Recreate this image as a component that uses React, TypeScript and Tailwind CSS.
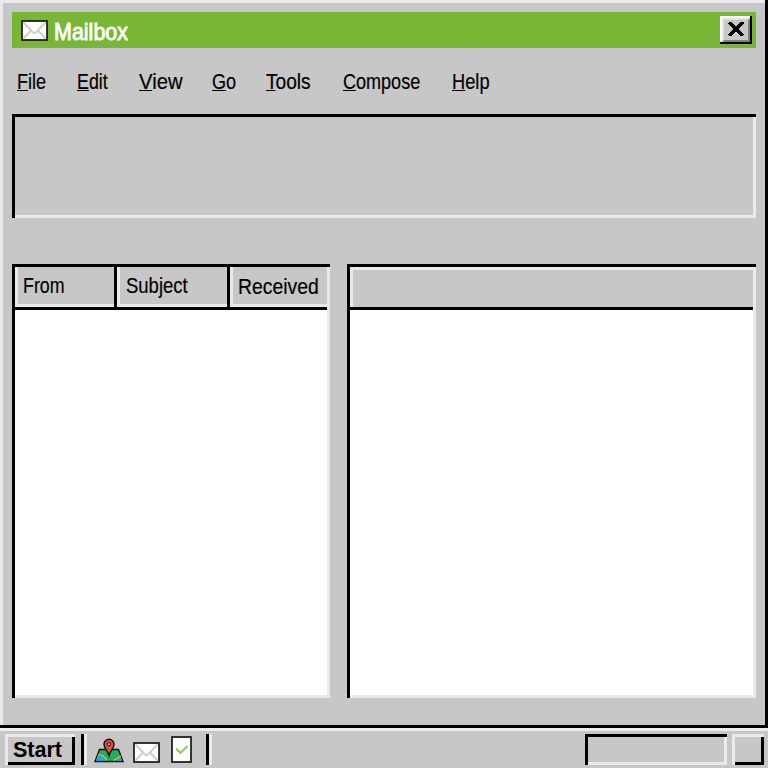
import type { ReactNode } from "react";

const uiFont = "font-['Liberation_Sans',Arial,sans-serif]";

function Sunken({ className, children }: { className: string; children?: ReactNode }) {
  return (
    <div className={`border-l-[3px] border-t-[3px] border-black ${className}`}>
      <div className="flex h-full flex-col border-b-[3px] border-r-[3px] border-[#eaeaea]">{children}</div>
    </div>
  );
}

function Raised({ className, children }: { className: string; children?: ReactNode }) {
  return (
    <div className={`border-l-[3px] border-t-[3px] border-[#eaeaea] ${className}`}>
      <div className="flex h-full items-center border-b-[3px] border-r-[3px] border-black">{children}</div>
    </div>
  );
}

function Envelope({ className }: { className: string }) {
  return (
    <svg viewBox="0 0 27 21" className={className}>
      <rect x="1" y="1" width="25" height="19" fill="#fff" stroke="#161616" strokeWidth="1.7" />
      <path d="M2.500 2.500 L12 12.500 Q13.500 14 15 12.500 L24.500 2.500 M2.500 18.500 L10 10.500 M24.500 18.500 L17 10.500" fill="none" stroke="#cfcfcf" strokeWidth="1.900" />
    </svg>
  );
}

function MapIcon() {
  return (
    <svg viewBox="0 0 30 25" className="h-[25px] w-[30px]">
      <path d="M5.500 11.500 H24.500 L29 23.500 H1 Z" fill="#1fae66" stroke="#111" strokeWidth="1.400" />
      <path d="M3.500 17.500 Q8 16 12 22.800 H2 Z" fill="#2f9fe8" />
      <path d="M4 16.500 Q9 16 13 22.500 M19.500 22.500 L27 18" stroke="#f5c52c" strokeWidth="1.100" fill="none" />
      <path d="M22 22.800 L27 19.500 L28 22.800 Z" fill="#2f9fe8" />
      <path d="M15 17.500 C13.500 12.500 10 10.500 10 6.200 A5 5 0 0 1 20 6.200 C20 10.500 16.500 12.500 15 17.500 Z" fill="#ea4b35" stroke="#111" strokeWidth="1.400" />
      <circle cx="15" cy="6.200" r="1.700" fill="#b5b5b5" stroke="#111" strokeWidth="1" />
    </svg>
  );
}

const menus = [
  { label: "File", box: "w-[60px]", scale: "scale-x-[0.82]" },
  { label: "Edit", box: "w-[62px]", scale: "scale-x-[0.81]" },
  { label: "View", box: "w-[73px]", scale: "scale-x-[0.92]" },
  { label: "Go", box: "w-[54px]", scale: "scale-x-[0.82]" },
  { label: "Tools", box: "w-[77px]", scale: "scale-x-[0.87]" },
  { label: "Compose", box: "w-[109px]", scale: "scale-x-[0.82]" },
  { label: "Help", box: "w-[60px]", scale: "scale-x-[0.83]" },
];

export default function App() {
  return (
    <div className={`flex h-[768px] w-[768px] flex-col overflow-hidden bg-[#c7c7c7] text-black ${uiFont}`}>
      <div className="h-[728px] border-b-[3px] border-r-[3px] border-black">
        <div className="flex h-full flex-col border-l-[3px] border-t-[3px] border-[#eaeaea] px-[9px] pt-[9px]">
          <header className="flex h-9 shrink-0 items-center bg-[#77b735] pl-[9px] pr-1">
            <Envelope className="h-[21px] w-[27px]" />
            <h1 className="ml-[6px] mt-[3px] origin-left scale-x-[0.895] whitespace-nowrap text-[24px] leading-6 text-white [-webkit-text-stroke:0.9px_white]">Mailbox</h1>
            <button aria-label="Close" className="ml-auto h-7 w-8 border-b-2 border-r-2 border-black">
              <span className="block h-full border-l-2 border-t-2 border-white">
                <span className="flex h-full items-start justify-center border-2 border-b-[#808080] border-l-[#e0e0e0] border-r-[#808080] border-t-[#e0e0e0] bg-[#c7c7c7] pt-[2px]">
                  <svg viewBox="0 0 16 14" className="h-[14px] w-4 shrink-0" shapeRendering="crispEdges">
                    <path d="M1 0 L15 14 M15 0 L1 14" stroke="#000" strokeWidth="3" fill="none" />
                  </svg>
                </span>
              </span>
            </button>
          </header>
          <nav className="flex h-[66px] shrink-0 pl-[5px] pt-[21px] text-[22px] leading-[26px]">
            {menus.map((m) => (
              <div key={m.label} className={`shrink-0 ${m.box}`}>
                <span className={`inline-block origin-left whitespace-nowrap [-webkit-text-stroke:0.2px_black] ${m.scale}`}>
                  <span className="underline decoration-1 underline-offset-[1px]">{m.label[0]}</span>
                  {m.label.slice(1)}
                </span>
              </div>
            ))}
          </nav>
          <Sunken className="h-[104px] shrink-0" />
          <main className="mt-[46px] flex h-[434px] shrink-0 gap-[17px]">
            <Sunken className="w-[318px]">
              <div className="flex h-[43px] shrink-0 border-b-[3px] border-black bg-[#c7c7c7] text-[22px] leading-[38px] [-webkit-text-stroke:0.2px_black]">
                <div className="w-[102px] border-r-[3px] border-black">
                  <div className="h-full border-b-[3px] border-l-[3px] border-[#eaeaea] pl-[5px]">
                    <span className="inline-block origin-left scale-x-[0.81]">From</span>
                  </div>
                </div>
                <div className="w-[113px] border-r-[3px] border-black">
                  <div className="h-full border-b-[3px] border-l-[3px] border-[#eaeaea] pl-[6px]">
                    <span className="inline-block origin-left scale-x-[0.84]">Subject</span>
                  </div>
                </div>
                <div className="w-[97px] border-b-[3px] border-l-[3px] border-[#eaeaea] pl-[5px] leading-10">
                  <span className="inline-block origin-left scale-x-[0.88]">Received</span>
                </div>
              </div>
              <div className="flex-1 bg-white" />
            </Sunken>
            <Sunken className="w-[409px]">
              <div className="h-[43px] shrink-0 border-b-[3px] border-black">
                <div className="h-full border-l-[3px] border-t-[3px] border-[#eaeaea] bg-[#c7c7c7]" />
              </div>
              <div className="flex-1 bg-white" />
            </Sunken>
          </main>
        </div>
      </div>
      <footer className="flex h-10 border-t-[3px] border-[#eeeaee] pl-[5px] pt-[3px]">
        <Raised className="h-[31px] w-[70px]">
          <span className="origin-left scale-x-[0.98] pl-[5px] pt-[1px] text-[22px] font-bold leading-6">Start</span>
        </Raised>
        <div className="ml-[6px] h-[31px] w-[6px] border-l-[3px] border-r-[3px] border-l-black border-r-[#eaeaea]" />
        <div className="ml-[7px] flex h-[31px] w-[112px] items-start">
          <div className="mt-[4px]"><MapIcon /></div>
          <Envelope className="ml-[9px] mt-[8px] h-[21px] w-[27px]" />
          <svg viewBox="0 0 21 27" className="ml-[11px] mt-[2px] h-[27px] w-[21px]">
            <rect x="1" y="1" width="19" height="25" fill="#fff" stroke="#161616" strokeWidth="1.7" />
            <path d="M5 12.500 L9.500 17 L16.500 10" fill="none" stroke="#83cf47" strokeWidth="1.800" />
          </svg>
        </div>
        <div className="h-[31px] w-[6px] border-l-[3px] border-r-[3px] border-l-black border-r-[#eaeaea]" />
        <Sunken className="ml-auto h-[31px] w-[142px]" />
        <Raised className="ml-[5px] mr-[4px] h-[31px] w-[32px]" />
      </footer>
    </div>
  );
}
